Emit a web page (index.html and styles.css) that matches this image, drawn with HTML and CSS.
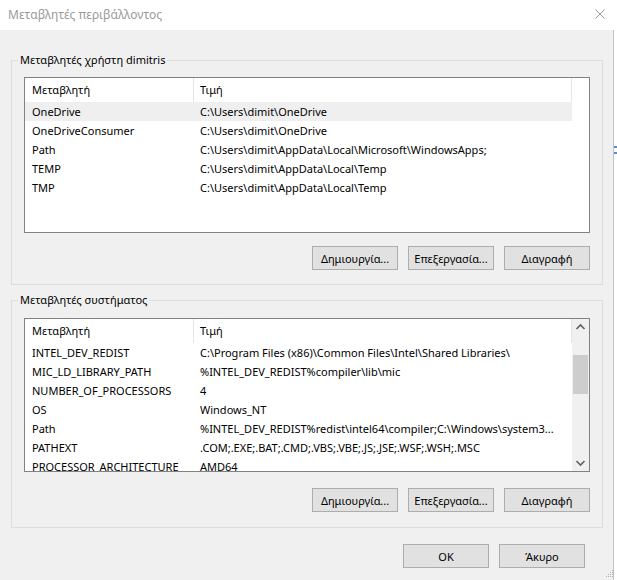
FILE: index.html
```html
<!DOCTYPE html>
<html lang="el">
<head>
<meta charset="utf-8">
<title>Μεταβλητές περιβάλλοντος</title>
<link rel="stylesheet" href="styles.css">
</head>
<body>
<div class="window">
  <div class="titlebar">
    <span class="title">Μεταβλητές περιβάλλοντος</span>
    <svg class="close" width="10" height="10" viewBox="0 0 10 10"><path d="M0.5 0.5 L9.5 9.5 M9.5 0.5 L0.5 9.5" stroke="#9a9a9a" stroke-width="1" fill="none"/></svg>
  </div>
  <div class="body">
    <fieldset class="group group-user">
      <legend>Μεταβλητές χρήστη dimitris</legend>
      <div class="list list-user">
        <div class="list-main">
          <div class="row head"><div class="c1">Μεταβλητή</div><div class="c2">Τιμή</div></div>
          <div class="row sel"><div class="c1">OneDrive</div><div class="c2">C:\Users\dimit\OneDrive</div></div>
          <div class="row"><div class="c1">OneDriveConsumer</div><div class="c2">C:\Users\dimit\OneDrive</div></div>
          <div class="row"><div class="c1">Path</div><div class="c2">C:\Users\dimit\AppData\Local\Microsoft\WindowsApps;</div></div>
          <div class="row"><div class="c1">TEMP</div><div class="c2">C:\Users\dimit\AppData\Local\Temp</div></div>
          <div class="row"><div class="c1">TMP</div><div class="c2">C:\Users\dimit\AppData\Local\Temp</div></div>
        </div>
      </div>
      <div class="btns">
        <button class="btn">Δημιουργία...</button>
        <button class="btn">Επεξεργασία...</button>
        <button class="btn">Διαγραφή</button>
      </div>
    </fieldset>

    <fieldset class="group group-sys">
      <legend>Μεταβλητές συστήματος</legend>
      <div class="list list-sys">
        <div class="list-main">
          <div class="row head"><div class="c1">Μεταβλητή</div><div class="c2">Τιμή</div></div>
          <div class="row"><div class="c1">INTEL_DEV_REDIST</div><div class="c2">C:\Program Files (x86)\Common Files\Intel\Shared Libraries\</div></div>
          <div class="row"><div class="c1">MIC_LD_LIBRARY_PATH</div><div class="c2">%INTEL_DEV_REDIST%compiler\lib\mic</div></div>
          <div class="row"><div class="c1">NUMBER_OF_PROCESSORS</div><div class="c2">4</div></div>
          <div class="row"><div class="c1">OS</div><div class="c2">Windows_NT</div></div>
          <div class="row"><div class="c1">Path</div><div class="c2">%INTEL_DEV_REDIST%redist\intel64\compiler;C:\Windows\system3...</div></div>
          <div class="row"><div class="c1">PATHEXT</div><div class="c2">.COM;.EXE;.BAT;.CMD;.VBS;.VBE;.JS;.JSE;.WSF;.WSH;.MSC</div></div>
          <div class="row"><div class="c1">PROCESSOR_ARCHITECTURE</div><div class="c2">AMD64</div></div>
        </div>
        <div class="scrollbar">
          <div class="arrow"><svg width="17" height="17" viewBox="0 0 17 17"><path d="M4.5 10 L8.5 6 L12.5 10" stroke="#606060" stroke-width="1.6" fill="none"/></svg></div>
          <div class="track"><div class="thumb"></div></div>
          <div class="arrow"><svg width="17" height="17" viewBox="0 0 17 17"><path d="M4.5 7 L8.5 11 L12.5 7" stroke="#606060" stroke-width="1.6" fill="none"/></svg></div>
        </div>
      </div>
      <div class="btns">
        <button class="btn">Δημιουργία...</button>
        <button class="btn">Επεξεργασία...</button>
        <button class="btn">Διαγραφή</button>
      </div>
    </fieldset>

    <div class="dialog-btns">
      <button class="btn">OK</button>
      <button class="btn">Άκυρο</button>
    </div>
  </div>
  <svg class="grip" width="8" height="8" viewBox="0 0 8 8">
    <rect x="6" y="0" width="1" height="1" fill="#b0b0b0"/>
    <rect x="4" y="2" width="1" height="1" fill="#b0b0b0"/>
    <rect x="6" y="2" width="1" height="1" fill="#b0b0b0"/>
    <rect x="2" y="4" width="1" height="1" fill="#b0b0b0"/>
    <rect x="4" y="4" width="1" height="1" fill="#b0b0b0"/>
    <rect x="6" y="4" width="1" height="1" fill="#b0b0b0"/>
    <rect x="0" y="6" width="1" height="1" fill="#b0b0b0"/>
    <rect x="2" y="6" width="1" height="1" fill="#b0b0b0"/>
    <rect x="4" y="6" width="1" height="1" fill="#b0b0b0"/>
    <rect x="6" y="6" width="1" height="1" fill="#b0b0b0"/>
  </svg>
  <div class="edge-mark"></div>
</div>
</body>
</html>
```

FILE: styles.css
```css
* { box-sizing: border-box; }

html, body {
  margin: 0;
  padding: 0;
  background: #ffffff;
}

body {
  font-family: "Noto Sans", "Open Sans", "DejaVu Sans", sans-serif;
  font-size: 11px;
  color: #000;
}

.window {
  position: relative;
  width: 617px;
  height: 580px;
  overflow: hidden;
}

.titlebar {
  height: 30px;
  background: #fff;
  display: flex;
  align-items: center;
  justify-content: space-between;
  padding: 0 12px 2px 8px;
}

.title {
  color: #9a9a9a;
  font-size: 12px;
}

.close { display: block; }

.body {
  width: 614px;
  height: 550px;
  background: #f0f0f0;
  border-right: 1px solid #c4c4c4;
  padding: 0 0 0 11px;
  display: flex;
  flex-direction: column;
}

.group {
  width: 592px;
  min-width: 0;
  margin: 0;
  border: 1px solid #dcdcdc;
  padding: 0 12px;
}

.group legend {
  margin-left: -6px;
  padding: 0 2px;
  line-height: 16px;
  font-size: 11px;
}

.group-user {
  margin-top: 22px;
  padding-top: 9px;
  padding-bottom: 14px;
}

.group-sys {
  margin-top: 7px;
  padding-top: 10px;
  padding-bottom: 15px;
}

.list {
  border: 1px solid #828282;
  background: #fff;
  display: flex;
  overflow: hidden;
}

.list-user { height: 156px; }
.list-sys { height: 154px; }

.list-main {
  flex: 1;
  min-width: 0;
  overflow: hidden;
}

.row {
  display: flex;
  height: 19px;
  line-height: 19px;
  white-space: nowrap;
  width: 547px;
}

.row .c1 {
  width: 169px;
  padding-left: 7px;
  overflow: hidden;
  flex: none;
}

.row .c2 {
  width: 378px;
  padding-left: 6px;
  overflow: hidden;
  text-overflow: ellipsis;
  flex: none;
}

.row.head {
  height: 24px;
  line-height: 23px;
}

.row.head .c1 { border-right: 1px solid #e5e5e5; }
.row.head .c2 { border-right: 1px solid #e5e5e5; }

.row.sel { background: #efefef; }

.scrollbar {
  width: 17px;
  flex: none;
  background: #f0f0f0;
  display: flex;
  flex-direction: column;
}

.arrow {
  height: 17px;
  flex: none;
}

.arrow svg { display: block; }

.track {
  flex: 1;
  padding: 19px 1px 0;
}

.thumb {
  height: 39px;
  background: #cdcdcd;
}

.btns {
  display: flex;
  justify-content: flex-end;
  gap: 10px;
}

.group-user .btns { margin-top: 13px; }
.group-sys .btns { margin-top: 16px; }

.btn {
  width: 86px;
  height: 24px;
  margin: 0;
  padding: 0;
  background: #e1e1e1;
  border: 1px solid #adadad;
  font-family: inherit;
  font-size: 11px;
  color: #000;
}

.dialog-btns {
  display: flex;
  justify-content: flex-end;
  gap: 10px;
  margin-top: 16px;
  padding-right: 28px;
}

.grip {
  position: absolute;
  right: 3px;
  bottom: 2px;
}

.edge-mark {
  position: absolute;
  left: 614px;
  top: 146px;
  width: 3px;
  height: 8px;
  border-top: 2px solid #5b8fc7;
  border-bottom: 2px solid #5b8fc7;
}
```
